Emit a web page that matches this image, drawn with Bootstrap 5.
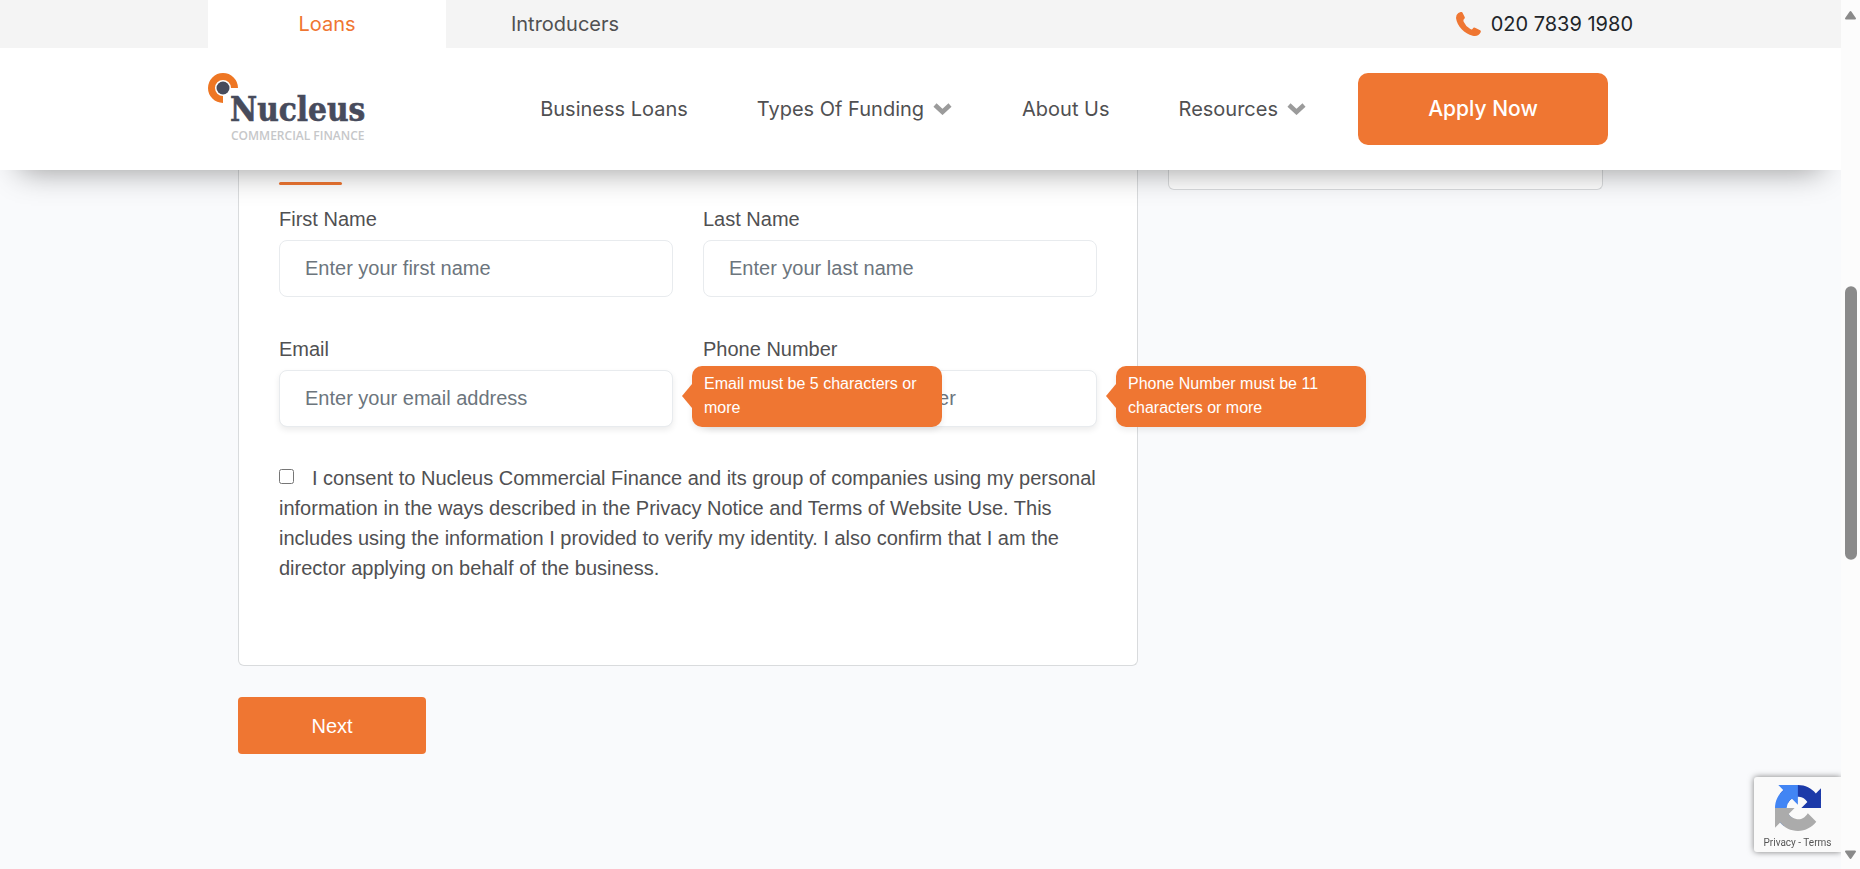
<!DOCTYPE html>
<html lang="en">
<head>
<meta charset="utf-8">
<meta name="viewport" content="width=device-width, initial-scale=1">
<title>Nucleus Commercial Finance</title>
<link href="https://cdn.jsdelivr.net/npm/bootstrap@5.3.0/dist/css/bootstrap.min.css" rel="stylesheet">
<style>
  :root { --brand: #ef7632; --ink: #505052; --scroll-w: 19px; }
  html { scrollbar-width: none; }
  body { background: #f9fafc; color: var(--ink); font: 20px/30px "Liberation Sans", Arial, sans-serif; padding-right: var(--scroll-w); min-height: 100vh; }
  a { color: inherit; text-decoration: none; }
  .wrap { max-width: 1425px; margin: 0 auto; }
  .site-header { background: #fff; font-family: Inter, sans-serif; font-size: 20px; line-height: 24px; box-shadow: 0 20px 30px -20px rgba(0,0,0,.42); z-index: 1020; }
  .top-bar { background: #f4f4f4; }
  .top-bar .tab { width: 238px; height: 48px; }
  .top-bar .tab.active { background: #fff; color: var(--brand); }
  .phone { color: #212529; gap: 10px; }
  .main-bar { height: 122px; padding-right: 25px; }
  .logo-svg { width: 157px; height: 72px; }
  .menu { gap: 69px; margin-right: 51px; }
  .btn-brand, .btn-brand:hover { background: var(--brand); color: #fff; border: 0; }
  .btn-apply { width: 250px; height: 72px; border-radius: 10px; font-size: 21px; font-weight: 500; }
  .btn-next { width: 188px; height: 57px; margin-top: 31px; border-radius: 4px; font-size: 20px; }
  .page-row { --bs-gutter-x: 30px; padding: 0 15px; margin: 0; }
  .panel { background: #fff; border: 1px solid #d9dbdd; border-top: 0; border-radius: 0 0 6px 6px; }
  .form-panel { padding: 12px 40px 82px; }
  .side-panel { height: 20px; }
  .rule { width: 63px; height: 3px; border-radius: 2px; background: var(--brand); margin-bottom: 19px; }
  .fields { --bs-gutter-x: 30px; row-gap: 37px; }
  .fields label { margin-bottom: 6px; }
  .fields .form-control { height: 57px; padding: 0 25px; border: 1px solid #e8ebee; border-radius: 8px; font-size: 20px; color: var(--ink); }
  .fields .form-control::placeholder { color: #6c757d; }
  .fields .raised { box-shadow: 0 3px 6px rgba(0,0,0,.08); }
  .tip { position: absolute; left: calc(100% + 19px); top: -4px; width: 250px; padding: 6px 12px 7px; background: var(--brand); color: #fff; border-radius: 10px; font-size: 16px; line-height: 24px; z-index: 5; box-shadow: 0 3px 6px rgba(0,0,0,.08); }
  .tip::before { content: ""; position: absolute; right: 100%; top: 18px; border: 12px solid transparent; border-right: 10px solid var(--brand); border-left: 0; }
  .consent { margin-top: 36px; }
  .consent input { width: 15px; height: 15px; margin: 0 18px 0 0; vertical-align: 1px; }
  .captcha { position: fixed; right: var(--scroll-w); bottom: 17px; width: 87px; height: 75px; background: #fafafa; border-radius: 3px 0 0 3px; box-shadow: 0 0 6px rgba(0,0,0,.5); font: 10px/12px Roboto, sans-serif; color: #555; padding: 8px 0 0; clip-path: inset(-10px 0 -10px -10px); }
  .captcha svg { margin-bottom: 6px; }
  .scroller { position: fixed; top: 0; right: 0; bottom: 0; width: var(--scroll-w); background: #fcfcfc; padding: 10px 0 9px; z-index: 1030; }
</style>
</head>
<body>
<header class="site-header sticky-top">
  <div class="top-bar">
    <div class="wrap d-flex align-items-center">
      <a href="#" class="tab active d-flex align-items-center justify-content-center">Loans</a>
      <a href="#" class="tab d-flex align-items-center justify-content-center">Introducers</a>
      <a href="tel:02078391980" class="phone d-flex align-items-center ms-auto">
        <svg width="25" height="25" viewBox="0 0 75 75" aria-hidden="true"><path fill="#ef7632" d="M7 3 14 0Q18-1 20 3L26 15Q28 19 24 21 21 24 23 29 29 43 43 51 48 54 50 50 53 45 57 47L71 54Q76 56 74 61C70 70 61 74 50 71 26 66 3 42 0 18Q0 7 7 3Z"/></svg>020 7839 1980</a>
    </div>
  </div>
  <div class="wrap main-bar d-flex align-items-center">
    <a href="#" aria-label="Nucleus Commercial Finance">
      <svg class="logo-svg d-block" viewBox="0 0 157 72">
        <path d="M26.500 15A11.500 11.500 0 1 0 15 26.500" fill="none" stroke="#ee7623" stroke-width="7"/>
        <circle cx="15" cy="15" r="6.500" fill="#474b5c"/>
        <text x="22" y="48" font-family="DejaVu Serif" font-stretch="condensed" font-weight="700" font-size="33" fill="#474b5c" stroke="#474b5c" stroke-width=".6">Nucleus</text>
        <text x="23" y="67" font-family="Open Sans" font-weight="600" font-size="12" fill="#c6c7c9">COMMERCIAL FINANCE</text>
      </svg>
    </a>
    <nav class="menu d-flex align-items-center ms-auto">
      <a href="#">Business Loans</a>
      <a href="#" class="d-flex align-items-center gap-2">Types Of Funding
        <svg width="21" height="12" viewBox="0 0 21 12" aria-hidden="true"><path d="M3 2l7.500 7L18 2" fill="none" stroke="#9b9b9b" stroke-width="4.500"/></svg></a>
      <a href="#">About Us</a>
      <a href="#" class="d-flex align-items-center gap-2">Resources
        <svg width="21" height="12" viewBox="0 0 21 12" aria-hidden="true"><path d="M3 2l7.500 7L18 2" fill="none" stroke="#9b9b9b" stroke-width="4.500"/></svg></a>
    </nav>
    <button type="button" class="btn btn-brand btn-apply">Apply Now</button>
  </div>
</header>

<main class="wrap">
  <div class="row page-row">
    <div class="col-8">
      <form>
        <div class="panel form-panel">
          <div class="rule"></div>
          <div class="row fields">
            <div class="col-6">
              <label class="d-block" for="first">First Name</label>
              <input class="form-control" id="first" type="text" placeholder="Enter your first name">
            </div>
            <div class="col-6">
              <label class="d-block" for="last">Last Name</label>
              <input class="form-control" id="last" type="text" placeholder="Enter your last name">
            </div>
            <div class="col-6">
              <label class="d-block" for="email">Email</label>
              <div class="position-relative">
                <input class="form-control raised" id="email" type="email" placeholder="Enter your email address">
                <div class="tip" role="alert">Email must be 5 characters or more</div>
              </div>
            </div>
            <div class="col-6">
              <label class="d-block" for="phone">Phone Number</label>
              <div class="position-relative">
                <input class="form-control raised" id="phone" type="tel" placeholder="Enter your phone number">
                <div class="tip" role="alert">Phone Number must be 11 characters or more</div>
              </div>
            </div>
          </div>
          <label class="consent d-block" for="consent"><input type="checkbox" id="consent">I consent to Nucleus Commercial Finance and its group of companies using my personal information in the ways described in the Privacy Notice and Terms of Website Use. This includes using the information I provided to verify my identity. I also confirm that I am the director applying on behalf of the business.</label>
        </div>
        <button type="button" class="btn btn-brand btn-next">Next</button>
      </form>
    </div>
    <div class="col-4"><div class="panel side-panel"></div></div>
  </div>
</main>

<aside class="captcha text-center">
  <svg class="d-block mx-auto" width="46" height="46" viewBox="0 0 64 64" aria-hidden="true">
    <path fill="#1c3aa9" d="M64 31.955l-.033-1.370V4.687l-7.160 7.160C50.948 4.674 42.033.093 32.050.093c-10.400 0-19.622 4.960-25.458 12.640l11.736 11.860a15.550 15.550 0 0 1 4.754-5.334c2.050-1.600 4.952-2.906 8.968-2.906.485 0 .860.057 1.135.163 4.976.393 9.288 3.140 11.828 7.124l-8.307 8.307L64 31.953"/>
    <path fill="#4285f4" d="M31.862.094l-1.370.033H4.594l7.160 7.160C4.580 13.147 0 22.060 0 32.046c0 10.400 4.960 19.622 12.640 25.458L24.500 45.768a15.550 15.550 0 0 1-5.334-4.754c-1.600-2.050-2.906-4.952-2.906-8.968 0-.485.057-.860.163-1.135.393-4.976 3.140-9.288 7.124-11.828l8.307 8.307L31.860.095"/>
    <path fill="#ababab" d="M.001 32.045l.033 1.370v25.898l7.160-7.160c5.860 7.173 14.774 11.754 24.760 11.754 10.400 0 19.622-4.960 25.458-12.640l-11.736-11.860a15.550 15.550 0 0 1-4.754 5.334c-2.050 1.600-4.952 2.906-8.968 2.906-.485 0-.860-.057-1.135-.163-4.976-.393-9.288-3.140-11.828-7.124l8.307-8.307c-10.522.040-22.400.066-27.295-.005"/>
  </svg>
  <a href="#">Privacy</a> - <a href="#">Terms</a>
</aside>

<div class="scroller d-flex flex-column align-items-center" aria-hidden="true">
  <svg width="13" height="10" viewBox="0 0 13 10"><path d="M2 8.500 6.500 2 11 8.500Z" fill="#8a8a8a" stroke="#8a8a8a" stroke-width="2" stroke-linejoin="round"/></svg>
  <svg class="flex-grow-1" width="12" viewBox="0 0 12 829" preserveAspectRatio="none"><rect y="266" width="12" height="273" rx="6" fill="#8a8a8a"/></svg>
  <svg width="13" height="10" viewBox="0 0 13 10"><path d="M2 1.500 6.500 8 11 1.500Z" fill="#8a8a8a" stroke="#8a8a8a" stroke-width="2" stroke-linejoin="round"/></svg>
</div>
<script src="https://cdn.jsdelivr.net/npm/bootstrap@5.3.0/dist/js/bootstrap.bundle.min.js"></script>
</body>
</html>
